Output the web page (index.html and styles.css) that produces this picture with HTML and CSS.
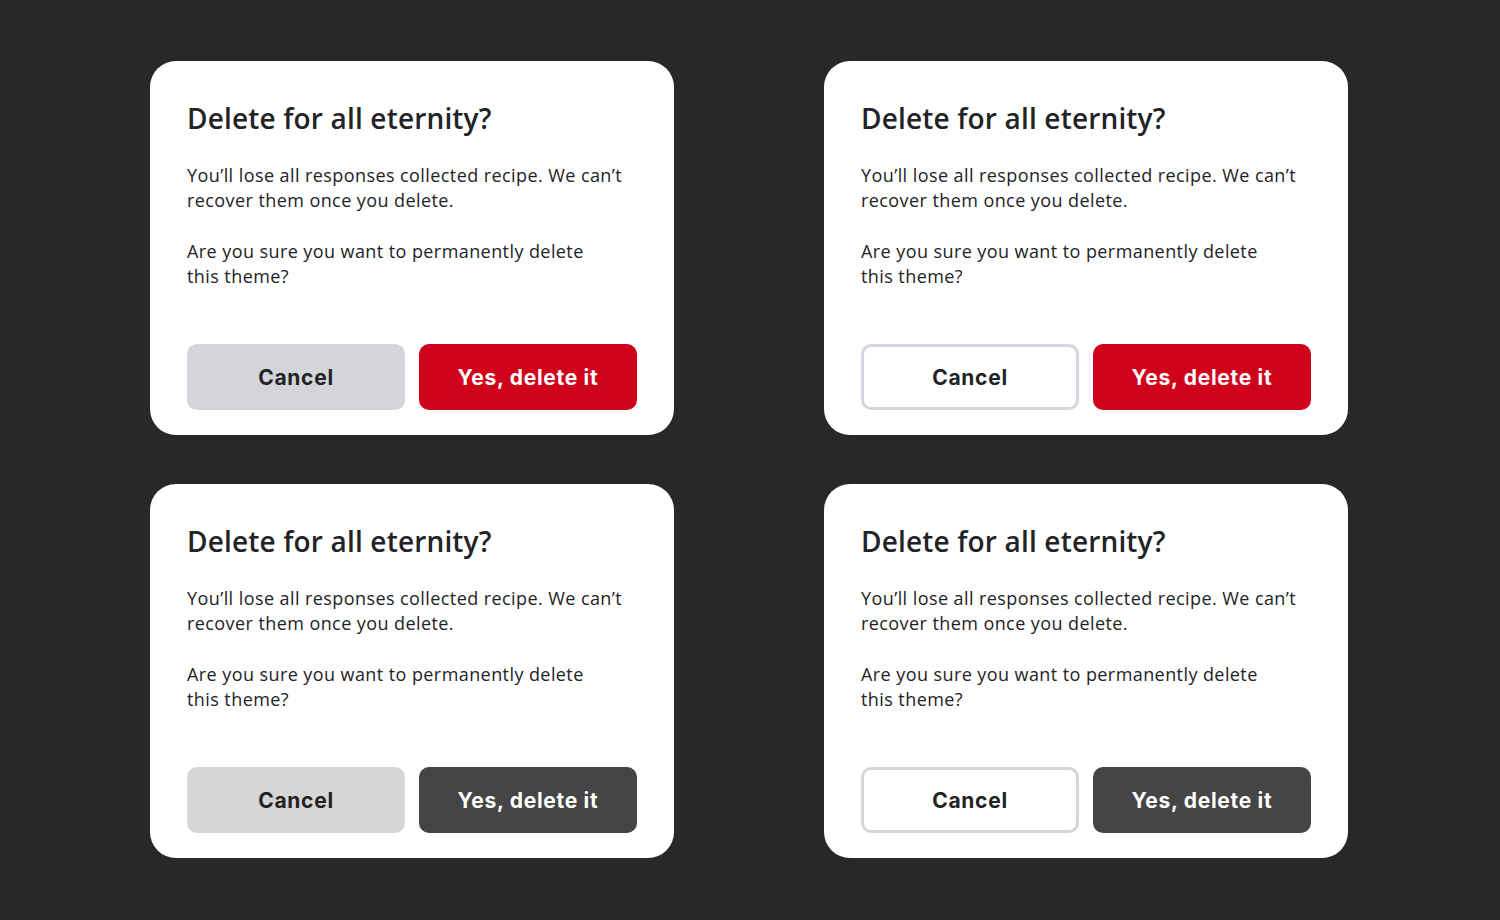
FILE: index.html
```html
<!DOCTYPE html>
<html lang="en">
<head>
<meta charset="utf-8">
<title>Delete dialogs</title>
<link rel="stylesheet" href="styles.css">
</head>
<body>
<main class="board">
  <section class="dialog">
    <h2 class="dialog-title">Delete for all eternity?</h2>
    <p class="dialog-text">You’ll lose all responses collected recipe. We can’t recover them once you delete.</p>
    <p class="dialog-text dialog-text--second">Are you sure you want to permanently delete<br>this theme?</p>
    <div class="dialog-actions">
      <button class="btn btn-cancel-grey">Cancel</button>
      <button class="btn btn-danger">Yes, delete it</button>
    </div>
  </section>
  <section class="dialog">
    <h2 class="dialog-title">Delete for all eternity?</h2>
    <p class="dialog-text">You’ll lose all responses collected recipe. We can’t recover them once you delete.</p>
    <p class="dialog-text dialog-text--second">Are you sure you want to permanently delete<br>this theme?</p>
    <div class="dialog-actions">
      <button class="btn btn-cancel-outline">Cancel</button>
      <button class="btn btn-danger">Yes, delete it</button>
    </div>
  </section>
  <section class="dialog">
    <h2 class="dialog-title">Delete for all eternity?</h2>
    <p class="dialog-text">You’ll lose all responses collected recipe. We can’t recover them once you delete.</p>
    <p class="dialog-text dialog-text--second">Are you sure you want to permanently delete<br>this theme?</p>
    <div class="dialog-actions">
      <button class="btn btn-cancel-neutral">Cancel</button>
      <button class="btn btn-dark">Yes, delete it</button>
    </div>
  </section>
  <section class="dialog">
    <h2 class="dialog-title">Delete for all eternity?</h2>
    <p class="dialog-text">You’ll lose all responses collected recipe. We can’t recover them once you delete.</p>
    <p class="dialog-text dialog-text--second">Are you sure you want to permanently delete<br>this theme?</p>
    <div class="dialog-actions">
      <button class="btn btn-cancel-outline-neutral">Cancel</button>
      <button class="btn btn-dark">Yes, delete it</button>
    </div>
  </section>
</main>
</body>
</html>
```

FILE: styles.css
```css
* { box-sizing: border-box; }

html, body {
  margin: 0;
  padding: 0;
  background: #28282a;
}

body {
  width: 1500px;
  height: 920px;
  overflow: hidden;
  font-family: "Open Sans", "Noto Sans", sans-serif;
}

.board {
  display: grid;
  grid-template-columns: 524px 524px;
  column-gap: 150px;
  row-gap: 49px;
  padding: 61px 150px;
}

.dialog {
  background: #ffffff;
  border-radius: 26px;
  height: 374px;
  padding: 40px 37px 25px;
  display: flex;
  flex-direction: column;
  color: #222326;
}

.dialog-title {
  margin: 0;
  font-size: 28px;
  line-height: 34px;
  font-weight: 600;
  letter-spacing: 0.17px;
}

.dialog-text {
  margin: 28px 0 0;
  font-size: 18px;
  line-height: 25px;
  font-weight: 400;
  letter-spacing: 0.42px;
}

.dialog-text--second {
  margin-top: 26px;
}

.dialog-actions {
  margin-top: auto;
  display: grid;
  grid-template-columns: 1fr 1fr;
  column-gap: 14px;
}

.btn {
  height: 66px;
  border-radius: 10px;
  border: 0;
  font-family: "Inter", "Liberation Sans", sans-serif;
  font-size: 21px;
  font-weight: 700;
  letter-spacing: 0.7px;
  cursor: pointer;
}

.btn-cancel-grey {
  background: #d4d5d9;
  color: #222326;
}

.btn-cancel-outline {
  background: #ffffff;
  color: #222326;
  border: 3px solid #d3d6dc;
}

.btn-cancel-neutral {
  background: #d6d6d6;
  color: #222222;
}

.btn-cancel-outline-neutral {
  background: #ffffff;
  color: #222222;
  border: 3px solid #d6d6d6;
}

.btn-danger {
  background: #d0021b;
  color: #ffffff;
}

.btn-dark {
  background: #454545;
  color: #ffffff;
}
```
